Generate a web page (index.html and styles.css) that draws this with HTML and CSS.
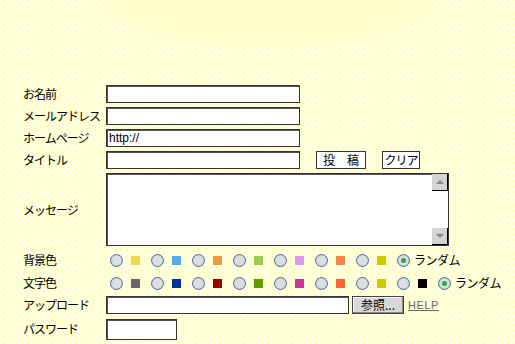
FILE: index.html
```html
<!DOCTYPE html>
<html lang="ja">
<head>
<meta charset="utf-8">
<title>投稿フォーム</title>
<link rel="stylesheet" href="styles.css">
</head>
<body>
<form class="form">
  <div class="label">お名前</div>
  <div class="field"><input class="text w194" type="text"></div>

  <div class="label">メールアドレス</div>
  <div class="field"><input class="text w194" type="text"></div>

  <div class="label">ホームページ</div>
  <div class="field"><input class="text w194" type="text" value="http://"></div>

  <div class="label">タイトル</div>
  <div class="field">
    <input class="text w194" type="text">
    <button class="btn btn-post" type="button">投　稿</button>
    <button class="btn btn-clear" type="button">クリア</button>
  </div>

  <div class="label">メッセージ</div>
  <div class="field">
    <div class="area-wrap">
      <textarea class="area"></textarea>
      <span class="sb sb-up"><span class="tri up"></span></span>
      <span class="sb sb-down"><span class="tri down"></span></span>
    </div>
  </div>

  <div class="label">背景色</div>
  <div class="field colors">
    <span class="radio"></span><span class="sw" style="background:#ecd84a"></span>
    <span class="radio"></span><span class="sw" style="background:#55aaee"></span>
    <span class="radio"></span><span class="sw" style="background:#ee9944"></span>
    <span class="radio"></span><span class="sw" style="background:#99cc55"></span>
    <span class="radio"></span><span class="sw" style="background:#dd99ee"></span>
    <span class="radio"></span><span class="sw" style="background:#f08844"></span>
    <span class="radio"></span><span class="sw" style="background:#cccc00"></span>
    <span class="radio checked"></span><span class="rand">ランダム</span>
  </div>

  <div class="label">文字色</div>
  <div class="field colors">
    <span class="radio"></span><span class="sw" style="background:#666666"></span>
    <span class="radio"></span><span class="sw" style="background:#003399"></span>
    <span class="radio"></span><span class="sw" style="background:#990000"></span>
    <span class="radio"></span><span class="sw" style="background:#669900"></span>
    <span class="radio"></span><span class="sw" style="background:#cc3399"></span>
    <span class="radio"></span><span class="sw" style="background:#ff6633"></span>
    <span class="radio"></span><span class="sw" style="background:#cccc00"></span>
    <span class="radio"></span><span class="sw" style="background:#000000"></span>
    <span class="radio checked"></span><span class="rand">ランダム</span>
  </div>

  <div class="label">アップロード</div>
  <div class="field">
    <input class="text w243" type="text">
    <button class="btn btn-browse" type="button">参照...</button>
    <a class="help" href="#">HELP</a>
  </div>

  <div class="label">パスワード</div>
  <div class="field"><input class="text pass" type="password"></div>
</form>
</body>
</html>
```

FILE: styles.css
```css
html, body {
  margin: 0;
  padding: 0;
}
body {
  width: 515px;
  height: 344px;
  overflow: hidden;
  font-family: "Noto Sans CJK JP", "Liberation Sans", sans-serif;
  font-size: 12px;
  color: #000;
  background-color: #ffffcc;
  background-image:
    radial-gradient(ellipse 175px 48px at 50% 0, #ffffcc 80%, rgba(255, 255, 204, 0) 100%),
    radial-gradient(circle at 1px 1px, #ffffff 0.7px, transparent 0.9px),
    radial-gradient(circle at 4px 4px, #ffffff 0.7px, transparent 0.9px);
  background-size: 360px 60px, 6px 6px, 6px 6px;
  background-position: 88px 0, 0 0, 0 0;
  background-repeat: no-repeat, repeat, repeat;
}
.form {
  display: grid;
  grid-template-columns: 83px auto;
  grid-template-rows: 22px 22px 22px 22px 77px 24px 22px 22px 26px;
  align-items: center;
  padding: 83px 0 0 23px;
}
.label {
  white-space: nowrap;
  line-height: 14px;
  letter-spacing: -1px;
}
.field {
  display: flex;
  align-items: center;
}
.text {
  box-sizing: border-box;
  height: 18px;
  margin: 0;
  padding: 0 2px;
  border: 1px solid #333;
  box-shadow: inset 1px 1px 0 #555;
  background: #fff;
  font-family: "Liberation Sans", sans-serif;
  font-size: 12px;
  color: #000;
  outline: none;
}
.w194 { width: 194px; }
.w243 { width: 243px; }
.pass { width: 71px; height: 21px; }
.btn {
  box-sizing: border-box;
  height: 18px;
  margin: 0;
  padding: 0;
  border: 1px solid #333;
  background: #fff;
  font-family: "Noto Sans CJK JP", sans-serif;
  font-size: 12px;
  line-height: 14px;
  color: #000;
}
.btn-post { width: 50px; margin-left: 16px; }
.btn-clear { width: 38px; margin-left: 16px; letter-spacing: -1px; }
.btn-browse {
  width: 52px;
  margin-left: 3px;
  background: #d8d8d8;
  border: 1px solid #444;
  box-shadow: inset -1px -1px 0 #888, inset 1px 1px 0 #f4f4f4;
}
.help {
  margin-left: 4px;
  color: #666;
  font-family: "Liberation Sans", sans-serif;
  font-size: 11px;
  letter-spacing: 0.5px;
  text-decoration: underline;
}
.area-wrap {
  position: relative;
  width: 343px;
  height: 73px;
}
.area {
  box-sizing: border-box;
  display: block;
  width: 343px;
  height: 73px;
  margin: 0;
  border: 1px solid #333;
  box-shadow: inset 1px 1px 0 #555;
  background: #fff;
  resize: none;
  overflow: hidden;
  outline: none;
}
.sb {
  position: absolute;
  right: 1px;
  width: 16px;
  height: 17px;
  box-sizing: border-box;
  background: #d4d4d4;
  border-right: 1px solid #000;
  border-bottom: 1px solid #000;
  display: flex;
  align-items: center;
  justify-content: center;
}
.sb-up { top: 1px; }
.sb-down { bottom: 1px; }
.tri {
  width: 0;
  height: 0;
  border-left: 4px solid transparent;
  border-right: 4px solid transparent;
}
.tri.up { border-bottom: 4px solid #888; }
.tri.down { border-top: 4px solid #888; }
.colors {
  padding-left: 4px;
}
.radio {
  box-sizing: border-box;
  width: 13px;
  height: 13px;
  border-radius: 50%;
  border: 1px solid #4a6e9c;
  background: #dedede;
  box-shadow: inset 0 0 0 1px #c8d4e4;
  margin-right: 8px;
  flex: none;
  position: relative;
}
.radio.checked { margin-right: 4px; }
.radio.checked::after {
  content: "";
  position: absolute;
  left: 3px;
  top: 3px;
  width: 5px;
  height: 5px;
  border-radius: 50%;
  background: #22aa33;
}
.sw {
  width: 9px;
  height: 9px;
  margin-right: 11px;
  flex: none;
}
.rand {
  font-size: 12px;
  line-height: 14px;
  letter-spacing: -0.5px;
}
```
